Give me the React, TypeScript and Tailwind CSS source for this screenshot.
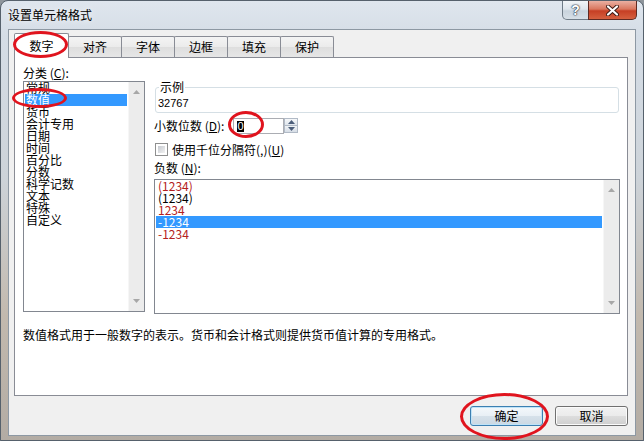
import React from "react";

function Tri({ dir, color = "#a7a7a7" }: { dir: "up" | "down"; color?: string }) {
  return (
    <svg width="7" height="4" viewBox="0 0 7 4">
      {dir === "up" ? (
        <polygon points="3.5,0 7,4 0,4" fill={color} />
      ) : (
        <polygon points="0,0 7,0 3.5,4" fill={color} />
      )}
    </svg>
  );
}

function ScrollBar({ w }: { w: string }) {
  return (
    <div className={`${w} h-full flex flex-col justify-between items-center bg-[#ececec] border-l border-[#f6f6f6] pt-[8px] pb-[8px]`}>
      <Tri dir="up" />
      <Tri dir="down" />
    </div>
  );
}

const categories = ["常规", "数值", "货币", "会计专用", "日期", "时间", "百分比", "分数", "科学记数", "文本", "特殊", "自定义"];

const negatives: { t: string; red: boolean }[] = [
  { t: "(1234)", red: true },
  { t: "(1234)", red: false },
  { t: "1234", red: true },
  { t: "-1234", red: false },
  { t: "-1234", red: true },
];

export default function App() {
  return (
    <div className="relative w-[644px] h-[441px] overflow-hidden bg-[#8f969c] font-['Noto_Sans_CJK_SC','Liberation_Sans',sans-serif] text-[12px] text-black">
      <div className="w-full h-full flex flex-col rounded-t-[8px] border border-[#56616c] bg-[linear-gradient(180deg,#dfe6ee_0%,#d5dde6_8%,#cdd3d9_40%,#c2b9ae_72%,#b3aca4_100%)]">
        {/* Title bar */}
        <div className="h-[28px] shrink-0 flex items-start">
          <div className="pl-[7px] pt-[7px] leading-[14px] [text-shadow:0_0_6px_#ffffff]">设置单元格格式</div>
          <div className="ml-auto mr-[6px] flex">
            <div className="w-[27px] h-[19px] flex items-center justify-center border border-t-0 border-[#6f7b87] rounded-bl-[5px] bg-[linear-gradient(180deg,#f2f5f8_0%,#dfe6ed_45%,#c9d3dd_55%,#d7dfe7_100%)]">
              <span className="text-[14px] font-bold leading-[14px] text-white font-['Liberation_Sans',sans-serif] [text-shadow:0_0_1px_#2a3340,0_0_1px_#2a3340,0_0_2px_#2a3340]">?</span>
            </div>
            <div className="-ml-px w-[49px] h-[19px] flex items-center justify-center border border-t-0 border-[#5e2a22] rounded-br-[5px] bg-[linear-gradient(180deg,#eab0a2_0%,#d9775f_45%,#c63f24_55%,#d5603f_100%)]">
              <svg width="13" height="11" viewBox="0 0 13 11">
                <path d="M2 1.5 L11 9.5 M11 1.5 L2 9.5" stroke="#3a1a14" strokeWidth="4" strokeLinecap="round" />
                <path d="M2 1.5 L11 9.5 M11 1.5 L2 9.5" stroke="#ffffff" strokeWidth="2.2" strokeLinecap="round" />
              </svg>
            </div>
          </div>
        </div>

        {/* Client area */}
        <div className="mx-[7px] h-[407px] shrink-0 border border-[#8d98a3] bg-[#f0f0f0] flex flex-col pl-[5px] pr-[7px] pt-[3px]">
          {/* Tabs */}
          <div className="flex items-end h-[24px] relative z-10">
            <div className="w-[55px] h-[25px] -mb-px bg-white border border-b-0 border-[#898c95] rounded-t-[2px] flex items-center justify-center leading-[14px] pb-[1px]">
              数字
            </div>
            {["对齐", "字体", "边框", "填充", "保护"].map((t) => (
              <div
                key={t}
                className="-ml-px w-[54px] h-[21px] border border-b-0 border-[#898c95] rounded-t-[2px] bg-[linear-gradient(180deg,#f4f4f4_0%,#ebebeb_50%,#dedede_51%,#e6e6e6_100%)] flex items-center justify-center leading-[14px]"
              >
                {t}
              </div>
            ))}
          </div>

          {/* Panel */}
          <div className="w-[614px] h-[339px] border border-[#898c95] bg-white flex flex-col pl-[8px] pt-[8px]">
            <div className="flex items-start">
              {/* Left column */}
              <div className="w-[122px] flex flex-col">
                <div className="h-[14px] leading-[14px]">
                  分类 (<u>C</u>):
                </div>
                <div className="mt-[1px] h-[231px] border border-[#828790] flex overflow-hidden">
                  <div className="w-[104px] px-[1px] flex flex-col">
                    {categories.map((c, i) => (
                      <div
                        key={c}
                        className={`h-[12px] leading-[12px] pl-[1px] whitespace-nowrap ${i === 1 ? "bg-[#3399ff] text-white" : ""}`}
                      >
                        {c}
                      </div>
                    ))}
                  </div>
                  <ScrollBar w="w-[16px]" />
                </div>
              </div>

              {/* Right column */}
              <div className="ml-[9px] w-[466px] flex flex-col">
                <fieldset className="mt-[15px] ml-px w-[464px] border border-[#d5dfe5] rounded-[3px] pb-[3px]">
                  <legend className="ml-[3px] px-[1px] leading-[12px]">示例</legend>
                  <div className="mt-[4px] pl-[2px] leading-[12px] font-['Liberation_Sans',sans-serif] text-[11px]">32767</div>
                </fieldset>

                <div className="mt-[5px] h-[16px] flex items-center">
                  <div className="w-[79px] leading-[14px] whitespace-nowrap">
                    小数位数 (<u>D</u>):
                  </div>
                  <div className="w-[51px] h-[16px] border border-[#abadb3] bg-white flex items-center pl-[3px]">
                    <span className="w-[7px] h-[11px] bg-black text-white leading-[11px] text-[11px] flex items-center justify-center font-['Liberation_Sans',sans-serif]">
                      0
                    </span>
                  </div>
                  <div className="w-[14px] h-[16px] flex flex-col">
                    <div className="h-[8px] border border-[#b1bac6] bg-[linear-gradient(180deg,#f6f8fa,#dfe5ec)] flex items-center justify-center">
                      <Tri dir="up" color="#4c5e7a" />
                    </div>
                    <div className="h-[8px] -mt-px border border-[#b1bac6] bg-[linear-gradient(180deg,#f0f3f6,#d6dde6)] flex items-center justify-center">
                      <Tri dir="down" color="#4c5e7a" />
                    </div>
                  </div>
                </div>

                <div className="mt-[9px] h-[13px] flex items-center">
                  <div className="ml-[1px] w-[13px] h-[13px] border border-[#8e8f8f] bg-white p-[2px]">
                    <div className="w-full h-full bg-[linear-gradient(135deg,#c6cad0,#f2f2f2)]" />
                  </div>
                  <div className="ml-[4px] leading-[14px] whitespace-nowrap">
                    使用千位分隔符(,)(<u>U</u>)
                  </div>
                </div>

                <div className="mt-[5px] h-[14px] leading-[14px]">
                  负数 (<u>N</u>):
                </div>

                <div className="mt-[4px] h-[135px] w-[466px] border border-[#828790] flex overflow-hidden">
                  <div className="w-[448px] px-[1px] flex flex-col">
                    {negatives.map((n, i) => (
                      <div
                        key={i}
                        className={`h-[12px] leading-[12px] pl-[2px] ${
                          i === 3 ? "bg-[#3399ff] text-white" : n.red ? "text-[#b42020]" : "text-black"
                        }`}
                      >
                        {n.t}
                      </div>
                    ))}
                  </div>
                  <ScrollBar w="w-[16px]" />
                </div>
              </div>
            </div>

            <div className="mt-[14px] leading-[14px] whitespace-nowrap">
              数值格式用于一般数字的表示。货币和会计格式则提供货币值计算的专用格式。
            </div>
          </div>

          {/* Buttons */}
          <div className="mt-[10px] flex justify-end gap-[12px]">
            <div className="w-[73px] h-[20px] rounded-[3px] border border-[#3c7fb1] bg-[linear-gradient(180deg,#f4f8fb_0%,#e8eff5_50%,#d6e1ea_51%,#cbd8e3_100%)] flex items-center justify-center leading-[14px] shadow-[inset_0_0_0_1px_#bfe3f8]">
              确定
            </div>
            <div className="w-[73px] h-[20px] rounded-[3px] border border-[#707070] bg-[linear-gradient(180deg,#f2f2f2_0%,#ebebeb_50%,#dddddd_51%,#cfcfcf_100%)] flex items-center justify-center leading-[14px] shadow-[inset_0_0_0_1px_#fbfbfb]">
              取消
            </div>
          </div>
        </div>
      </div>

      {/* Red annotation ellipses */}
      <div className="absolute z-20 left-[13px] top-[31px] w-[55px] h-[27px] rounded-[50%] border-[3px] border-[#e0141e]" />
      <div className="absolute z-20 left-[12px] top-[88px] w-[55px] h-[20px] rounded-[50%] border-[3px] border-[#e0141e]" />
      <div className="absolute z-20 left-[228px] top-[111px] w-[36px] h-[27px] rounded-[50%] border-[3px] border-[#e0141e]" />
      <div className="absolute z-20 left-[460px] top-[393px] w-[89px] h-[47px] rounded-[50%] border-[3px] border-[#e0141e]" />
    </div>
  );
}
